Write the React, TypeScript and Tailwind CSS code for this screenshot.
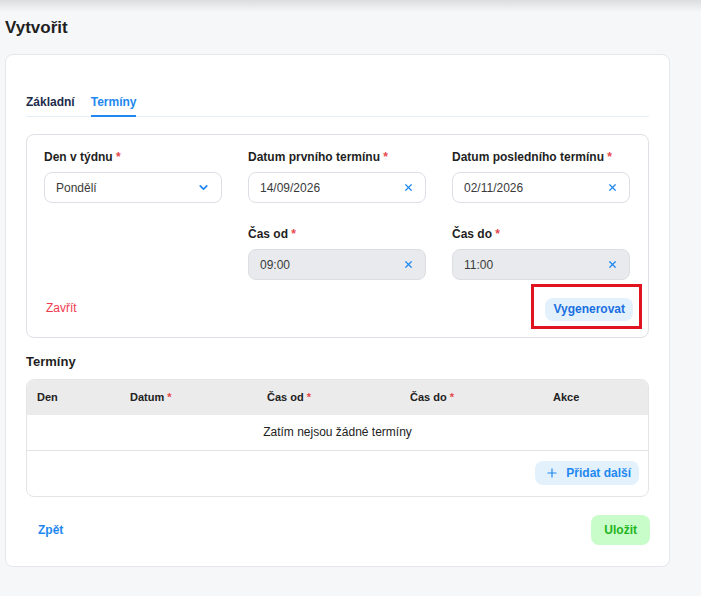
import { ChevronDown, Plus, X } from "lucide-react";

const FONT = { fontFamily: '"Liberation Sans", Arial, sans-serif' };

// popisek pole s povinnou hvězdičkou
function Label({ text }: { text: string }) {
  return (
    <p className="text-[12px] leading-[18px] font-bold text-[#1f1f1f]">
      {text} <span className="text-[#e5484d]">*</span>
    </p>
  );
}

function DateInput({ value, disabled }: { value: string; disabled?: boolean }) {
  return (
    <div
      className={`mt-[6px] flex h-[31px] items-center justify-between rounded-lg border px-[11px] ${
        disabled ? "border-[#dcdee2] bg-[#e8eaed]" : "border-[#dcdfe5] bg-white"
      }`}
    >
      <span className="text-[12px] text-[#3a3a3a]">{value}</span>
      <X size={11} strokeWidth={2.6} className="text-[#1e88f0]" />
    </div>
  );
}

export default function App() {
  return (
    <div className="min-h-[596px] bg-[#f5f7f9] text-[#1f1f1f]" style={FONT}>
      <div className="h-[12px] bg-gradient-to-b from-[#dcdddf] to-[#f5f7f9]" />
      <h1 className="mt-[4px] pl-[5px] text-[17px] leading-[24px] font-bold">Vytvořit</h1>

      <div className="mt-[14px] ml-[5px] w-[665px] rounded-lg border border-[#e6e8eb] bg-white px-[20px] pt-[33px] pb-[21px]">
        {/* taby */}
        <div className="flex gap-[16px] border-b border-[#e3eef9]">
          <button type="button" className="h-[28px] text-[12px] font-bold text-[#1c2b4a]">
            Základní
          </button>
          <button
            type="button"
            className="-mb-px h-[29px] border-b-2 border-[#1e88f0] text-[12px] font-bold text-[#1e88f0]"
          >
            Termíny
          </button>
        </div>

        {/* generátor termínů */}
        <div className="mt-[17px] rounded-lg border border-[#dfe0e6] px-[17px] pt-[13px] pb-[16px]">
          <div className="grid grid-cols-[178px_178px_178px] gap-x-[26px] gap-y-[22px]">
            <div>
              <Label text="Den v týdnu" />
              <div className="mt-[6px] flex h-[31px] items-center justify-between rounded-lg border border-[#dcdfe5] px-[11px]">
                <span className="text-[12px] text-[#3a3a3a]">Pondělí</span>
                <ChevronDown size={13} strokeWidth={3.2} className="text-[#1e88f0]" />
              </div>
            </div>
            <div>
              <Label text="Datum prvního termínu" />
              <DateInput value="14/09/2026" />
            </div>
            <div>
              <Label text="Datum posledního termínu" />
              <DateInput value="02/11/2026" />
            </div>
            <div />
            <div>
              <Label text="Čas od" />
              <DateInput value="09:00" disabled />
            </div>
            <div>
              <Label text="Čas do" />
              <DateInput value="11:00" disabled />
            </div>
          </div>

          <div className="mt-[16px] flex items-center justify-between pl-[2px]">
            <button type="button" className="text-[12px] text-[#f0384f]">
              Zavřít
            </button>
            <div className="relative -mr-[2px]">
              <button
                type="button"
                className="h-[23px] rounded-lg bg-[#e3f1fd] px-[8px] text-[12px] font-bold text-[#1a6fe0]"
              >
                Vygenerovat
              </button>
              <div className="pointer-events-none absolute -top-[12px] -right-[9px] -bottom-[8px] -left-[14px] border-[3px] border-[#e0141e]" />
            </div>
          </div>
        </div>

        {/* seznam termínů */}
        <h2 className="mt-[15px] text-[13px] leading-[18px] font-bold">Termíny</h2>
        <div className="mt-[8px] overflow-hidden rounded-lg border border-[#e5e5e5]">
          <div className="flex h-[35px] items-center bg-[#ebebeb] text-[11px] font-bold text-[#222]">
            <div className="w-[93px] pl-[10px]">Den</div>
            <div className="w-[137px] pl-[10px]">
              Datum <span className="text-[#e5484d]">*</span>
            </div>
            <div className="w-[143px] pl-[10px]">
              Čas od <span className="text-[#e5484d]">*</span>
            </div>
            <div className="w-[143px] pl-[10px]">
              Čas do <span className="text-[#e5484d]">*</span>
            </div>
            <div className="flex-1 pl-[10px]">Akce</div>
          </div>
          <div className="flex h-[36px] items-center justify-center border-b border-[#e3e3e3] text-[12px] text-[#222]">
            Zatím nejsou žádné termíny
          </div>
          <div className="flex h-[45px] items-center justify-end pr-[9px]">
            <button
              type="button"
              className="flex h-[24px] items-center gap-[7px] rounded-lg bg-[#e3f1fd] pr-[8px] pl-[10px] text-[12px] font-bold text-[#1e88f0]"
            >
              <Plus size={14} strokeWidth={2} />
              Přidat další
            </button>
          </div>
        </div>

        <div className="mt-[18px] flex items-center justify-between">
          <button type="button" className="pl-[12px] text-[12px] font-bold text-[#1e88f0]">
            Zpět
          </button>
          <button
            type="button"
            className="-mr-px h-[30px] rounded-lg bg-[#c8fcc8] px-[13px] text-[12px] font-bold text-[#1fb51f]"
          >
            Uložit
          </button>
        </div>
      </div>
    </div>
  );
}
